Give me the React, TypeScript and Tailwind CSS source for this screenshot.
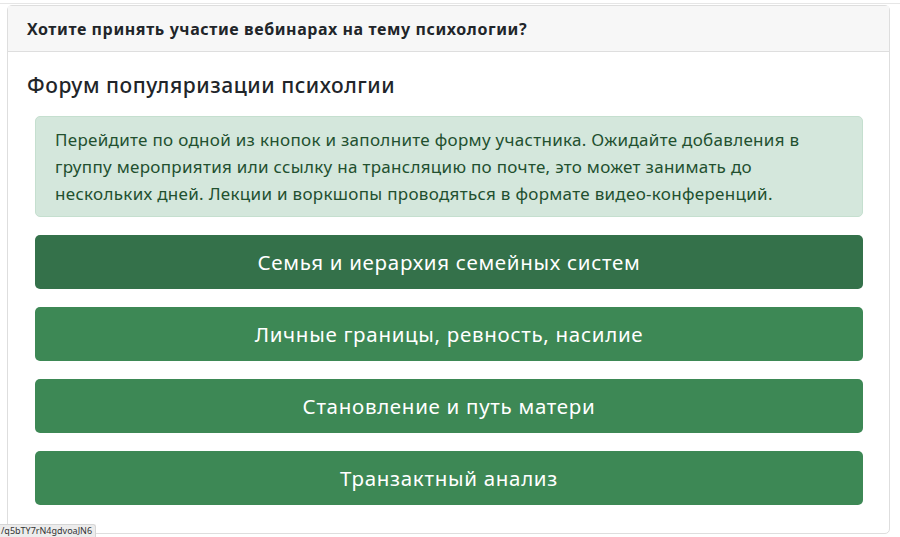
const topics = [
  'Семья и иерархия семейных систем',
  'Личные границы, ревность, насилие',
  'Становление и путь матери',
  'Транзактный анализ',
]

export default function App() {
  return (
    <div
      className="relative h-[537px] w-[900px] overflow-hidden bg-white text-[#212529]"
      style={{ fontFamily: '"Noto Sans", "Open Sans", sans-serif' }}
    >
      <div className="mt-[3px] border-t border-[#e6e6e6] pt-px">
        <div className="ml-[7px] mr-[10px] rounded-[5px] border border-[#dedede]">
          <div className="flex h-[46px] items-center border-b border-[#dedede] bg-[#f7f7f7] px-[19px] text-[16px] font-bold tracking-[0.6px]">
            Хотите принять участие вебинарах на тему психологии?
          </div>
          <div className="px-[19px] pb-[28px] pt-[17px]">
            <h4 className="mb-[14px] text-[21px] font-medium leading-[33px] tracking-[0.55px]">
              Форум популяризации психолгии
            </h4>
            <div className="pl-[8px] pr-[7px]">
              <div className="rounded-[5px] border border-[#c5dfcf] bg-[#d4e7dc] px-[19px] py-[9px] text-[17px] leading-[27px] tracking-[0.3px] text-[#22502f]">
                Перейдите по одной из кнопок и заполните форму участника. Ожидайте добавления в группу мероприятия или
                ссылку на трансляцию по почте, это может занимать до нескольких дней. Лекции и воркшопы проводяться в
                формате видео-конференций.
              </div>
              <div className="mt-[18px] flex flex-col gap-[18px]">
                {topics.map((t, i) => (
                  <button
                    key={t}
                    className={
                      i === 0
                        ? 'h-[54px] w-full rounded-[5px] bg-[#34714a] text-[20.5px] tracking-[0.7px] text-white'
                        : 'h-[54px] w-full rounded-[5px] bg-[#3d8855] text-[20.5px] tracking-[0.7px] text-white'
                    }
                  >
                    {t}
                  </button>
                ))}
              </div>
            </div>
          </div>
        </div>
      </div>
      <div className="absolute bottom-0 left-0 rounded-tr-[3px] border-r border-t border-[#d6d6d6] bg-[#ececec] pl-px pr-[3px] text-[9px] leading-[12px] text-[#333]">
        /q5bTY7rN4gdvoaJN6
      </div>
    </div>
  )
}
